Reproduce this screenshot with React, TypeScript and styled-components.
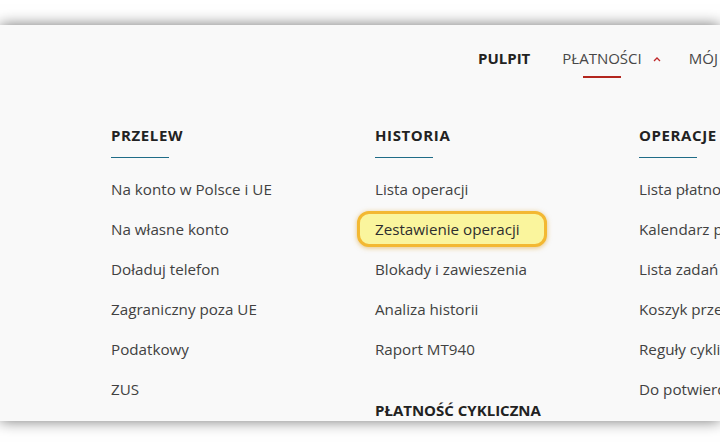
import styled, { createGlobalStyle } from "styled-components";

const GlobalStyle = createGlobalStyle`
  html, body {
    margin: 0;
    padding: 0;
    background: #ffffff;
    overflow: hidden;
  }
  body {
    font-family: "Open Sans", "Liberation Sans", sans-serif;
  }
`;

const Page = styled.div`
  width: 100%;
  height: 447px;
  padding-top: 25px;
  box-sizing: border-box;
`;

const Panel = styled.div`
  height: 396px;
  background: #f9f9f9;
  box-shadow: 0 0 14px rgba(0, 0, 0, 0.55);
  overflow: hidden;
`;

const TopNav = styled.nav`
  display: flex;
  align-items: flex-start;
  padding: 23px 0 0 478px;
  white-space: nowrap;
`;

const NavItem = styled.a<{ $active?: boolean; $bold?: boolean }>`
  position: relative;
  display: flex;
  align-items: center;
  gap: 11px;
  margin-right: ${(p) => (p.$active ? "28px" : "32px")};
  padding-bottom: 9px;
  font-size: 15px;
  line-height: 21px;
  font-weight: ${(p) => (p.$bold ? 700 : 400)};
  color: ${(p) => (p.$bold ? "#222" : "#474747")};
  text-decoration: none;
  &::after {
    content: "";
    display: ${(p) => (p.$active ? "block" : "none")};
    position: absolute;
    bottom: 0;
    left: 21px;
    width: 38px;
    height: 2px;
    background: #b3261e;
  }
`;

const Caret = styled.svg`
  width: 8px;
  height: 6px;
`;

const Columns = styled.div`
  display: grid;
  grid-template-columns: repeat(3, 264px);
  padding: 47px 0 0 111px;
  white-space: nowrap;
`;

const Column = styled.div`
  display: flex;
  flex-direction: column;
`;

const Heading = styled.h3<{ $plain?: boolean }>`
  margin: ${(p) => (p.$plain ? "31px 0 0" : "0")};
  font-size: 15px;
  line-height: 20px;
  font-weight: 700;
  letter-spacing: ${(p) => (p.$plain ? "0" : "0.6px")};
  color: #222;
  &::after {
    content: "";
    display: ${(p) => (p.$plain ? "none" : "block")};
    width: 58px;
    height: 1px;
    margin-top: 12px;
    background: #1f6c87;
  }
`;

const List = styled.ul`
  list-style: none;
  margin: 11px 0 0;
  padding: 0;
`;

const Row = styled.li`
  height: 40px;
  display: flex;
  align-items: center;
`;

const ItemLink = styled.a<{ $highlight?: boolean }>`
  font-size: 15.2px;
  color: #414141;
  text-decoration: none;
  ${(p) =>
    p.$highlight &&
    `
    margin-left: -18px;
    padding: 0 24px 0 15px;
    line-height: 30px;
    border: 3px solid #f3b832;
    border-radius: 12px;
    background: #faf59d;
    color: #2e2e2e;
    box-shadow: 0 1px 5px rgba(214, 150, 20, 0.55);
  `}
`;

interface Section {
  title: string;
  items: string[];
  highlight?: string;
  extra?: string;
}

const sections: Section[] = [
  {
    title: "PRZELEW",
    items: [
      "Na konto w Polsce i UE",
      "Na własne konto",
      "Doładuj telefon",
      "Zagraniczny poza UE",
      "Podatkowy",
      "ZUS",
    ],
  },
  {
    title: "HISTORIA",
    items: [
      "Lista operacji",
      "Zestawienie operacji",
      "Blokady i zawieszenia",
      "Analiza historii",
      "Raport MT940",
    ],
    highlight: "Zestawienie operacji",
    extra: "PŁATNOŚĆ CYKLICZNA",
  },
  {
    title: "OPERACJE",
    items: [
      "Lista płatności",
      "Kalendarz płatności",
      "Lista zadań",
      "Koszyk przelewów",
      "Reguły cykliczne",
      "Do potwierdzenia",
    ],
  },
];

export default function App() {
  return (
    <>
      <GlobalStyle />
      <Page>
        <Panel>
          <TopNav>
            <NavItem $bold>PULPIT</NavItem>
            <NavItem $active>
              PŁATNOŚCI
              <Caret viewBox="0 0 8 6">
                <path d="M1 5 L4 2 L7 5" fill="none" stroke="#c0282a" strokeWidth="1.3" />
              </Caret>
            </NavItem>
            <NavItem>MÓJ BANK</NavItem>
          </TopNav>
          <Columns>
            {sections.map((s) => (
              <Column key={s.title}>
                <Heading>{s.title}</Heading>
                <List>
                  {s.items.map((item) => (
                    <Row key={item}>
                      <ItemLink $highlight={item === s.highlight}>{item}</ItemLink>
                    </Row>
                  ))}
                </List>
                {s.extra && <Heading $plain>{s.extra}</Heading>}
              </Column>
            ))}
          </Columns>
        </Panel>
      </Page>
    </>
  );
}
